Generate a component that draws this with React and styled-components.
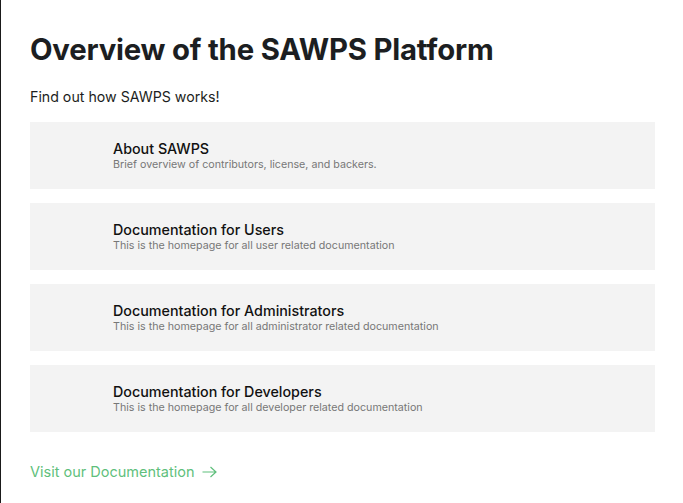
import React from "react";
import styled, { createGlobalStyle } from "styled-components";

const Global = createGlobalStyle`
  html, body { margin: 0; padding: 0; background: #fff; }
  body {
    font-family: Inter, "Noto Sans", sans-serif;
    color: #1c1e21;
    border-left: 1px solid #1a1a1a;
    min-height: 503px;
    box-sizing: border-box;
  }
`;

const Page = styled.main`
  padding: 30px 28px 0 29px;
  display: flex;
  flex-direction: column;
`;

const Title = styled.h1`
  margin: 0;
  font-size: 29.3px;
  font-weight: 700;
  line-height: 40px;
  letter-spacing: -0.2px;
  color: #1c1e21;
`;

const Lead = styled.p`
  margin: 16px 0 0;
  font-size: 14.2px;
  line-height: 22px;
  color: #1c1e21;
`;

const List = styled.div`
  margin-top: 14px;
  display: flex;
  flex-direction: column;
  gap: 14px;
`;

const Card = styled.a`
  display: flex;
  flex-direction: column;
  justify-content: center;
  height: 67px;
  padding-left: 83px;
  background: #f3f3f3;
  text-decoration: none;
  box-sizing: border-box;
`;

const CardTitle = styled.div`
  font-size: 14.3px;
  font-weight: 500;
  line-height: 19px;
  color: #111;
`;

const CardDesc = styled.div`
  font-size: 10.7px;
  line-height: 14px;
  color: #777;
`;

const Link = styled.a`
  margin-top: 30px;
  display: inline-flex;
  align-items: center;
  gap: 7px;
  font-size: 14.5px;
  line-height: 20px;
  color: #5fbf7c;
  text-decoration: none;
`;

const items = [
  ["About SAWPS", "Brief overview of contributors, license, and backers."],
  ["Documentation for Users", "This is the homepage for all user related documentation"],
  ["Documentation for Administrators", "This is the homepage for all administrator related documentation"],
  ["Documentation for Developers", "This is the homepage for all developer related documentation"],
];

export default function App() {
  return (
    <>
      <Global />
      <Page>
        <Title>Overview of the SAWPS Platform</Title>
        <Lead>Find out how SAWPS works!</Lead>
        <List>
          {items.map(([t, d]) => (
            <Card key={t} href="#">
              <CardTitle>{t}</CardTitle>
              <CardDesc>{d}</CardDesc>
            </Card>
          ))}
        </List>
        <div>
          <Link href="#">
            Visit our Documentation
            <svg width="15" height="12" viewBox="0 0 15 12" fill="none" stroke="currentColor" strokeWidth="1.2">
              <path d="M0.5 6h13.5M8.5 1l5.5 5-5.5 5" />
            </svg>
          </Link>
        </div>
      </Page>
    </>
  );
}
